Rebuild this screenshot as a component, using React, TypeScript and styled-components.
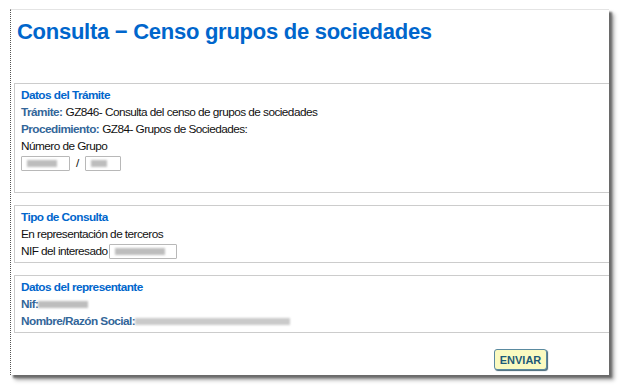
import React from 'react';
import styled, { createGlobalStyle } from 'styled-components';

const GlobalStyle = createGlobalStyle`
  html, body {
    margin: 0;
    padding: 0;
    background: #ffffff;
    overflow: hidden;
  }
`;

const Page = styled.div`
  width: 619px;
  height: 385px;
  padding: 9px 0 0 10px;
  box-sizing: border-box;
  font-family: "Liberation Sans", Arial, sans-serif;
`;

const Frame = styled.div`
  width: 599px;
  height: 366px;
  box-sizing: border-box;
  background: #ffffff;
  border-left: 1px dotted #555555;
  border-top: 1px solid #e4e4e4;
  box-shadow: 3px 3px 2px #6a6a6a, 5px 5px 4px #aaaaaa;
  overflow: hidden;
  display: flex;
  flex-direction: column;
`;

const Title = styled.h1`
  margin: 8px 0 0 6px;
  font-size: 22px;
  line-height: 28px;
  font-weight: bold;
  color: #0066cc;
  letter-spacing: -0.27px;
`;

const Sections = styled.div`
  margin: 37px 0 0 3px;
  display: flex;
  flex-direction: column;
  gap: 12px;
`;

const Section = styled.div<{ $height: number }>`
  height: ${(p) => p.$height}px;
  box-sizing: border-box;
  border: 1px solid #cccccc;
  border-right: none;
  padding: 3px 0 0 6px;
  font-size: 11.8px;
  line-height: 17px;
  color: #111111;
  letter-spacing: -0.55px;
`;

const Heading = styled.div`
  font-weight: bold;
  color: #0066cc;
`;

const Line = styled.div`
  display: flex;
  align-items: center;
  height: 17px;
  white-space: pre;
`;

const Label = styled.span`
  font-weight: bold;
  color: #336699;
  margin-right: 3px;
`;

const Field = styled.span<{ $width: number }>`
  display: inline-flex;
  align-items: center;
  width: ${(p) => p.$width}px;
  height: 15px;
  box-sizing: border-box;
  border: 1px solid #b8b8b8;
  border-radius: 1px;
  padding-left: 5px;
  background: #ffffff;
`;

const Blur = styled.span<{ $width: number; $tone?: string }>`
  display: inline-block;
  width: ${(p) => p.$width}px;
  height: 7px;
  background: ${(p) => p.$tone || '#bdbdbd'};
  filter: blur(1px);
`;

const Slash = styled.span`
  margin: 0 6px;
`;

const Footer = styled.div`
  display: flex;
  justify-content: flex-end;
  padding: 16px 62px 0 0;
`;

const SendButton = styled.button`
  width: 53px;
  height: 21px;
  padding: 0;
  font-family: "Liberation Sans", Arial, sans-serif;
  font-size: 11px;
  font-weight: bold;
  color: #1e5a78;
  background: #fafac0;
  border: 1px solid #5a8aa0;
  border-radius: 3px;
  box-shadow: 1px 1px 1px #446677;
  cursor: pointer;
`;

const App = () => {
  return (
    <>
      <GlobalStyle />
      <Page>
        <Frame>
          <Title>Consulta − Censo grupos de sociedades</Title>
          <Sections>
            <Section $height={110}>
              <Heading>Datos del Trámite</Heading>
              <Line>
                <Label>Trámite:</Label>GZ846- Consulta del censo de grupos de sociedades
              </Line>
              <Line>
                <Label>Procedimiento:</Label>GZ84- Grupos de Sociedades:
              </Line>
              <Line>Número de Grupo</Line>
              <Line>
                <Field $width={49}>
                  <Blur $width={30} />
                </Field>
                <Slash>/</Slash>
                <Field $width={36}>
                  <Blur $width={16} />
                </Field>
              </Line>
            </Section>
            <Section $height={58}>
              <Heading>Tipo de Consulta</Heading>
              <Line>En representación de terceros</Line>
              <Line>
                NIF del interesado
                <Field $width={68} style={{ marginLeft: 1 }}>
                  <Blur $width={50} />
                </Field>
              </Line>
            </Section>
            <Section $height={58}>
              <Heading>Datos del representante</Heading>
              <Line>
                <Label style={{ marginRight: 0 }}>Nif:</Label>
                <Blur $width={50} />
              </Line>
              <Line>
                <Label style={{ marginRight: 0 }}>Nombre/Razón Social:</Label>
                <Blur $width={155} $tone="#cacaca" />
              </Line>
            </Section>
          </Sections>
          <Footer>
            <SendButton>ENVIAR</SendButton>
          </Footer>
        </Frame>
      </Page>
    </>
  );
};

export default App;
